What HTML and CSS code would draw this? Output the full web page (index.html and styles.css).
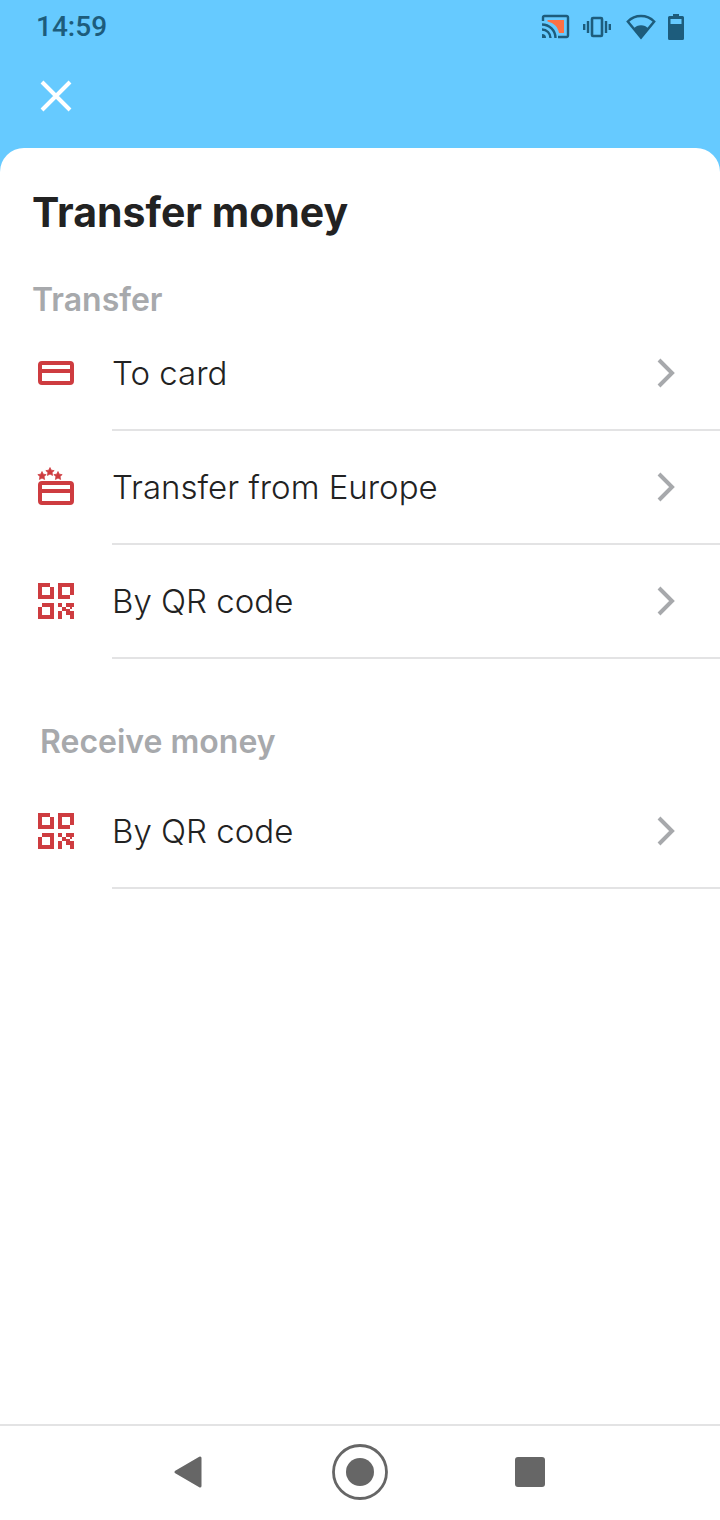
FILE: index.html
```html
<!DOCTYPE html>
<html lang="en">
<head>
<meta charset="utf-8">
<meta name="viewport" content="width=device-width, initial-scale=1">
<title>Transfer money</title>
<link rel="stylesheet" href="styles.css">
</head>
<body>
<svg class="defs" width="0" height="0" aria-hidden="true">
  <symbol id="card" viewBox="0 0 40 40">
    <rect x="4" y="10" width="32" height="20" rx="2" fill="none" stroke="currentColor" stroke-width="4"/>
    <path d="M4 18h32" stroke="currentColor" stroke-width="4"/>
  </symbol>
  <symbol id="card-stars" viewBox="0 0 40 40">
    <rect x="4" y="16" width="32" height="20" rx="2" fill="none" stroke="currentColor" stroke-width="4"/>
    <path d="M4 24h32" stroke="currentColor" stroke-width="4"/>
    <g fill="currentColor" stroke="currentColor" stroke-width=".7">
      <path d="M14 .5l1.300 2.700 2.900.4-2.100 2 .5 2.900-2.600-1.400-2.600 1.400.5-2.900-2.100-2 2.900-.4z"/>
      <path d="M6 4.500l1.300 2.700 2.900.4-2.100 2 .5 2.900L6 11.100l-2.600 1.400.5-2.900-2.100-2 2.900-.4z"/>
      <path d="M22 4.500l1.300 2.700 2.900.4-2.100 2 .5 2.900-2.600-1.400-2.600 1.400.5-2.900-2.100-2 2.900-.4z"/>
    </g>
  </symbol>
  <symbol id="qr" viewBox="0 0 40 40">
    <g fill="currentColor" fill-rule="evenodd" shape-rendering="crispEdges">
      <path d="M2 2h12v4h4v12H2zM6 6v8h8V6z"/>
      <path d="M22 2h16v12h-4v4H22zM26 6v8h8V6z"/>
      <path d="M6 22h12v16H2V26h4zM6 26v8h8v-8z"/>
      <path d="M22 22h4v4h-4zM30 22h8v4h-8zM26 26h4v4h-4zM34 26h2v2h-2zM22 30h4v8h-4zM30 28h4v2h-4zM30 30h8v4h-8zM34 34h4v4h-4z"/>
    </g>
  </symbol>
  <symbol id="chevron" viewBox="0 0 24 32">
    <path d="M3 3l13 13L3 29" fill="none" stroke="currentColor" stroke-width="4"/>
  </symbol>
</svg>
<div class="screen">
  <header class="status">
    <time class="clock">14:59</time>
    <div class="indicators">
      <svg width="30" height="26" viewBox="0 0 30 26" aria-label="Casting">
        <path d="M3 7V3.500A1.500 1.500 0 0 1 4.500 2h22A1.500 1.500 0 0 1 28 3.500v18a1.500 1.500 0 0 1-1.500 1.500H18" fill="none" stroke="currentColor" stroke-width="2.400"/>
        <path d="M7.500 6H24v13h-5C18 13 14 9 7.500 7.500z" fill="#ff7043"/>
        <path d="M2 20a4 4 0 0 1 4 4H2z" fill="currentColor"/>
        <path d="M2 15.500A8.500 8.500 0 0 1 10.500 24M2 10.500A13.500 13.500 0 0 1 15.500 24" fill="none" stroke="currentColor" stroke-width="2.400"/>
      </svg>
      <svg width="32" height="22" viewBox="-1 0 32 22" aria-label="Vibrate">
        <rect x="9" y="2" width="10" height="18" rx="1" fill="none" stroke="currentColor" stroke-width="2.600"/>
        <path d="M5 5v12M1.200 8v6M23 5v12M26.800 8v6" stroke="currentColor" stroke-width="2.400"/>
      </svg>
      <svg width="30" height="26" viewBox="0 0 30 26" aria-label="Wi-Fi">
        <path d="M1.800 7.500C9 .2 21 .2 28.200 7.500L15 23.500z" fill="none" stroke="currentColor" stroke-width="2.400"/>
        <path d="M7.500 14.500c4-4.500 11-4.500 15 0L15 24.500z" fill="currentColor"/>
      </svg>
      <svg width="16" height="26" viewBox="0 0 16 26" aria-label="Battery">
        <path fill="currentColor" fill-rule="evenodd" d="M5 0h6v2h3.500A1.500 1.500 0 0 1 16 3.500v21a1.500 1.500 0 0 1-1.500 1.500h-13A1.500 1.500 0 0 1 0 24.500v-21A1.500 1.500 0 0 1 1.500 2H5zM2.500 5v5h11V5z"/>
      </svg>
    </div>
  </header>
  <div class="toolbar">
    <button class="close" type="button" aria-label="Close">
      <svg width="32" height="32" viewBox="0 0 32 32"><path d="M2 2l28 28M30 2L2 30" stroke="currentColor" stroke-width="4"/></svg>
    </button>
  </div>
  <main class="sheet">
    <h1 class="title">Transfer money</h1>
    <section>
      <h2 class="heading">Transfer</h2>
      <ul class="list">
        <li><button class="row" type="button"><svg class="icon"><use href="#card"/></svg><span class="body"><span>To card</span><svg class="chevron"><use href="#chevron"/></svg></span></button></li>
        <li><button class="row" type="button"><svg class="icon"><use href="#card-stars"/></svg><span class="body"><span>Transfer from Europe</span><svg class="chevron"><use href="#chevron"/></svg></span></button></li>
        <li><button class="row" type="button"><svg class="icon"><use href="#qr"/></svg><span class="body"><span>By QR code</span><svg class="chevron"><use href="#chevron"/></svg></span></button></li>
      </ul>
    </section>
    <section class="receive">
      <h2 class="heading">Receive money</h2>
      <ul class="list">
        <li><button class="row" type="button"><svg class="icon"><use href="#qr"/></svg><span class="body"><span>By QR code</span><svg class="chevron"><use href="#chevron"/></svg></span></button></li>
      </ul>
    </section>
  </main>
  <nav class="system">
    <button type="button" aria-label="Back"><svg width="30" height="34" viewBox="0 0 30 34"><path d="M1 17L25 3v28z" fill="currentColor" stroke="currentColor" stroke-width="3" stroke-linejoin="round"/></svg></button>
    <button type="button" aria-label="Home"><svg width="56" height="56" viewBox="0 0 56 56"><circle cx="28" cy="28" r="26.500" fill="none" stroke="currentColor" stroke-width="2.800"/><circle cx="28" cy="28" r="14" fill="currentColor"/></svg></button>
    <button type="button" aria-label="Recent apps"><svg width="30" height="30" viewBox="0 0 30 30"><rect width="30" height="30" rx="3" fill="currentColor"/></svg></button>
  </nav>
</div>
</body>
</html>
```
FILE: styles.css
```css
* {
  box-sizing: border-box;
}

body {
  margin: 0;
  background: #66caff;
  color: #222;
  font-family: Inter, "Liberation Sans", sans-serif;
}

button {
  margin: 0;
  padding: 0;
  border: 0;
  background: none;
  color: inherit;
  font: inherit;
  text-align: left;
  cursor: pointer;
}

svg {
  display: block;
  flex: none;
  overflow: visible;
}

.defs {
  position: absolute;
}

.screen {
  display: flex;
  flex-direction: column;
  min-height: 100vh;
}

.status {
  display: flex;
  align-items: center;
  justify-content: space-between;
  height: 54px;
  padding: 0 36px;
  color: #1d5c7c;
}

.clock {
  font: 500 28px/34px Roboto, sans-serif;
}

.indicators {
  display: flex;
  align-items: center;
  gap: 12px;
}

.toolbar {
  padding: 26px 40px 36px;
  color: #fff;
}

.close {
  display: block;
}

.sheet {
  flex: 1;
  padding-top: 40px;
  border-radius: 24px 24px 0 0;
  background: #fff;
}

.title {
  margin: 0 0 47px;
  padding: 0 32px;
  font-size: 41px;
  line-height: 48px;
  font-weight: 700;
}

.heading {
  margin: 0;
  padding: 0 32px;
  color: #a7a9ac;
  font-size: 32px;
  line-height: 34px;
  font-weight: 600;
}

.list {
  margin: 0;
  padding: 0;
  list-style: none;
}

.row {
  display: flex;
  align-items: center;
  gap: 36px;
  width: 100%;
  padding-left: 36px;
  font-size: 33px;
  font-weight: 300;
  line-height: 40px;
}

.icon {
  width: 40px;
  height: 40px;
  margin-bottom: 2px;
  color: #ce3c40;
}

.body {
  display: flex;
  flex: 1;
  align-items: center;
  justify-content: space-between;
  min-height: 114px;
  padding-right: 40px;
  border-bottom: 2px solid #e3e3e4;
}

.chevron {
  width: 24px;
  height: 32px;
  color: #a7a9ac;
}

.receive {
  padding-top: 66px;
}

.receive .heading {
  margin-bottom: 16px;
  padding: 0 40px;
}

.system {
  display: grid;
  grid-template-columns: repeat(3, 170px);
  align-items: center;
  justify-content: center;
  justify-items: center;
  height: 96px;
  padding-bottom: 2px;
  border-top: 2px solid #e3e3e4;
  background: #fff;
  color: #666;
}
```
